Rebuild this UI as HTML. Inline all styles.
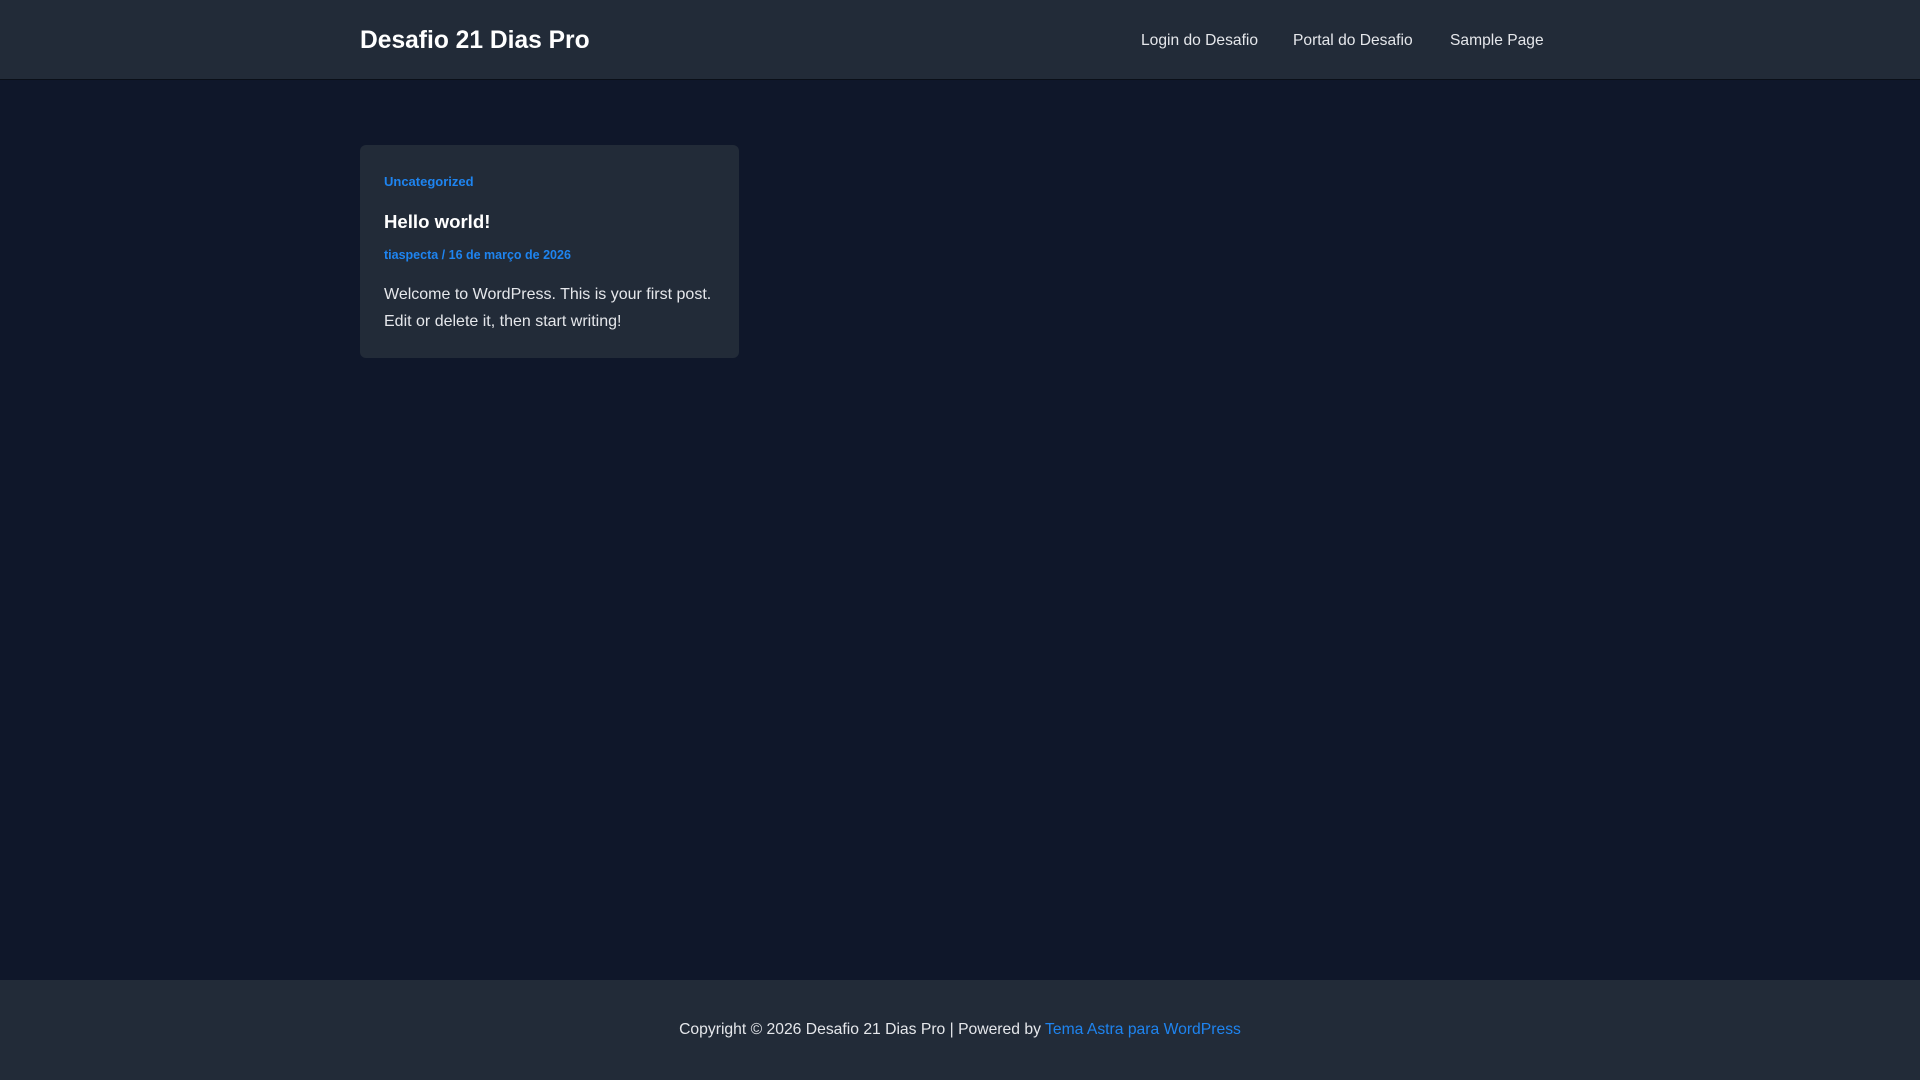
<!DOCTYPE html>
<html><head><meta charset="utf-8"><style>
*{margin:0;padding:0;box-sizing:border-box}
body{width:1920px;height:1080px;background:#0f172a;font-family:"Liberation Sans",Arial,sans-serif;position:relative;overflow:hidden}
header{position:absolute;left:0;top:0;width:1920px;height:80px;background:#222b38;border-bottom:1px solid #0a0f18}
.logo{position:absolute;left:360px;top:27px;color:#fff;font-weight:bold;font-size:24.6px}
.nav{position:absolute;top:32px;color:#e5e7eb;font-size:15.6px}
.card{position:absolute;left:360px;top:145px;width:379px;height:213px;background:#222b38;border-radius:6px}
.cat{position:absolute;left:24px;top:29px;color:#1e84f0;font-size:13px;font-weight:bold}
.h{position:absolute;left:24px;top:66px;color:#fff;font-size:18.6px;font-weight:bold}
.meta{position:absolute;left:24px;top:103px;color:#1e84f0;font-size:12.5px;font-weight:bold}
.body{position:absolute;left:24px;top:136px;width:345px;color:#e5e7eb;font-size:16px;line-height:27px}
footer{position:absolute;left:0;top:980px;width:1920px;height:100px;background:#222b38;text-align:center;color:#e5e7eb;font-size:15.7px;padding-top:41px}
footer a{color:#1e84f0;text-decoration:none}
</style></head><body>
<header>
<div class="logo">Desafio 21 Dias Pro</div>
<div class="nav" style="left:1141px">Login do Desafio</div>
<div class="nav" style="left:1293px">Portal do Desafio</div>
<div class="nav" style="left:1450px">Sample Page</div>
</header>
<div class="card">
<div class="cat">Uncategorized</div>
<div class="h">Hello world!</div>
<div class="meta">tiaspecta / 16 de março de 2026</div>
<div class="body">Welcome to WordPress. This is your first post. Edit or delete it, then start writing!</div>
</div>
<footer>Copyright © 2026 Desafio 21 Dias Pro | Powered by <a>Tema Astra para WordPress</a></footer>
</body></html>
